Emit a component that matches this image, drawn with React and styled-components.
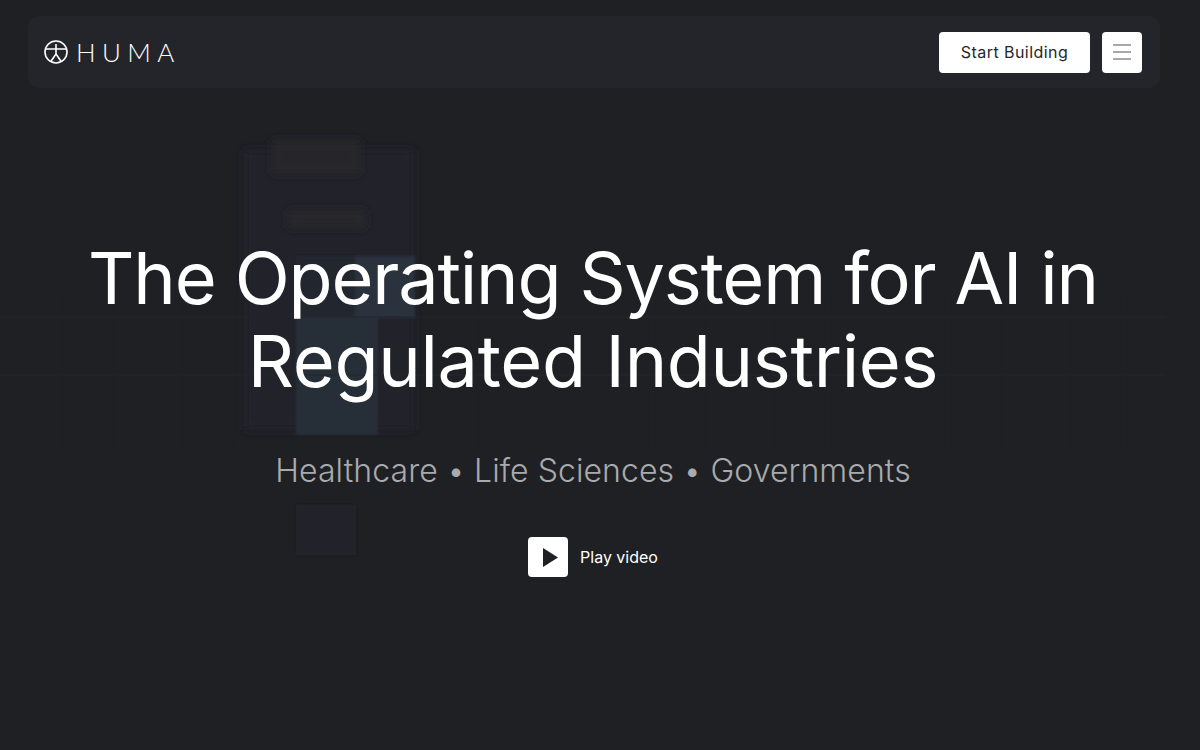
import React from 'react';
import styled, { createGlobalStyle } from 'styled-components';

const GlobalStyle = createGlobalStyle`
    html, body {
        margin: 0;
        padding: 0;
        background: #1f2024;
    }
    * {
        box-sizing: border-box;
    }
`;

const Page = styled.div`
    position: relative;
    width: 1200px;
    height: 750px;
    overflow: hidden;
    padding: 16px 40px 0 28px;
    background: #1f2024;
    font-family: Inter, "Liberation Sans", sans-serif;
`;

const Backdrop = styled.svg`
    position: absolute;
    top: 0;
    left: 0;
    width: 1200px;
    height: 750px;
`;

const Nav = styled.header`
    position: relative;
    display: flex;
    align-items: center;
    justify-content: space-between;
    height: 72px;
    padding: 0 18px 0 16px;
    border-radius: 12px;
    background: #24252a;
`;

const Logo = styled.div`
    display: flex;
    align-items: center;
    gap: 8px;
    color: #ffffff;
`;

const LogoText = styled.span`
    font-family: Lato, sans-serif;
    font-weight: 300;
    font-size: 26px;
    letter-spacing: 6.4px;
    line-height: 30px;
`;

const NavActions = styled.div`
    display: flex;
    align-items: center;
    gap: 12px;
`;

const NavButton = styled.button`
    height: 41px;
    width: ${props => props.width}px;
    display: flex;
    align-items: center;
    justify-content: center;
    padding: 0;
    border: none;
    border-radius: 4px;
    background: #ffffff;
    color: #25272b;
    font-family: Inter, sans-serif;
    font-size: 16px;
    letter-spacing: 0.45px;
`;

const Hero = styled.main`
    position: relative;
    display: flex;
    flex-direction: column;
    align-items: center;
    padding: 148px 2px 0 0;
`;

const Title = styled.h1`
    margin: 0;
    text-align: center;
    font-family: Inter, sans-serif;
    font-weight: 400;
    font-size: 72px;
    line-height: 83px;
    color: #ffffff;
`;

const TitleLine = styled.span`
    display: block;
    letter-spacing: ${props => props.$spacing}px;
`;

const Subtitle = styled.p`
    margin: 49px 0 0;
    font-family: Inter, sans-serif;
    font-weight: 300;
    font-size: 32px;
    line-height: 40px;
    letter-spacing: 0.07px;
    color: #a9aaad;
`;

const PlayRow = styled.div`
    display: flex;
    align-items: center;
    gap: 12px;
    margin-top: 46px;
`;

const PlayBox = styled.div`
    width: 40px;
    height: 40px;
    display: flex;
    align-items: center;
    justify-content: center;
    padding-left: 5px;
    border-radius: 4px;
    background: #ffffff;
`;

const PlayLabel = styled.span`
    font-family: Inter, sans-serif;
    font-size: 16px;
    color: #ffffff;
`;

const gridRows = [317, 375];
const gridCols = [58, 118, 178, 238, 474, 533, 592, 652, 710, 770, 828, 888, 948, 1006, 1066, 1124];

const patches = [
    { x: 244, y: 150, w: 170, h: 280, fill: '#20232a', blur: 'url(#soft)' },
    { x: 272, y: 140, w: 88, h: 34, fill: '#26272b', blur: 'url(#soft)' },
    { x: 288, y: 210, w: 78, h: 18, fill: '#27282c', blur: 'url(#soft)' },
    { x: 296, y: 256, w: 60, h: 60, fill: '#21262d', blur: 'url(#edge)' },
    { x: 296, y: 316, w: 82, h: 119, fill: '#252d38', blur: 'url(#edge)' },
    { x: 355, y: 256, w: 60, h: 62, fill: '#29333e', blur: 'url(#edge)' },
    { x: 296, y: 505, w: 60, h: 50, fill: '#212429', blur: 'url(#edge)' },
];

const App = () => (
    <>
        <GlobalStyle />
        <Page>
            <Backdrop viewBox="0 0 1200 750">
                <defs>
                    <filter id="edge" x="-10%" y="-10%" width="120%" height="120%">
                        <feGaussianBlur stdDeviation="1" />
                    </filter>
                    <filter id="soft" x="-30%" y="-50%" width="160%" height="200%">
                        <feGaussianBlur stdDeviation="4" />
                    </filter>
                </defs>
                {patches.map((p, i) => (
                    <rect key={i} x={p.x} y={p.y} width={p.w} height={p.h} fill={p.fill} filter={p.blur} />
                ))}
                {gridRows.map(y => (
                    <line key={y} x1="0" x2="1165" y1={y} y2={y} stroke="#25272b" />
                ))}
                {gridCols.map(x => (
                    <line key={x} x1={x} x2={x} y1="290" y2="450" stroke="#212327" />
                ))}
            </Backdrop>
            <Nav>
                <Logo>
                    <svg width="24" height="24" viewBox="0 0 24 24" fill="none" stroke="#fff" strokeWidth="1.6">
                        <circle cx="12" cy="12" r="11" />
                        <path d="M1.8 9H22.2M12 4V14M12 14L6.8 21.5M12 14L17.2 21.5" />
                    </svg>
                    <LogoText>HUMA</LogoText>
                </Logo>
                <NavActions>
                    <NavButton width={151}>Start Building</NavButton>
                    <NavButton width={40}>
                        <svg width="18" height="16" viewBox="0 0 18 16" fill="none" stroke="#8a8a8a" strokeWidth="1.5">
                            <path d="M0 1H18M0 8H18M0 15H18" />
                        </svg>
                    </NavButton>
                </NavActions>
            </Nav>
            <Hero>
                <Title>
                    <TitleLine $spacing={-1.17}>The Operating System for AI in</TitleLine>
                    <TitleLine $spacing={-0.32}>Regulated Industries</TitleLine>
                </Title>
                <Subtitle>Healthcare • Life Sciences • Governments</Subtitle>
                <PlayRow>
                    <PlayBox>
                        <svg width="15" height="19" viewBox="0 0 15 19">
                            <path d="M0 0L15 9.5L0 19Z" fill="#1f2024" />
                        </svg>
                    </PlayBox>
                    <PlayLabel>Play video</PlayLabel>
                </PlayRow>
            </Hero>
        </Page>
    </>
);

export default App;
